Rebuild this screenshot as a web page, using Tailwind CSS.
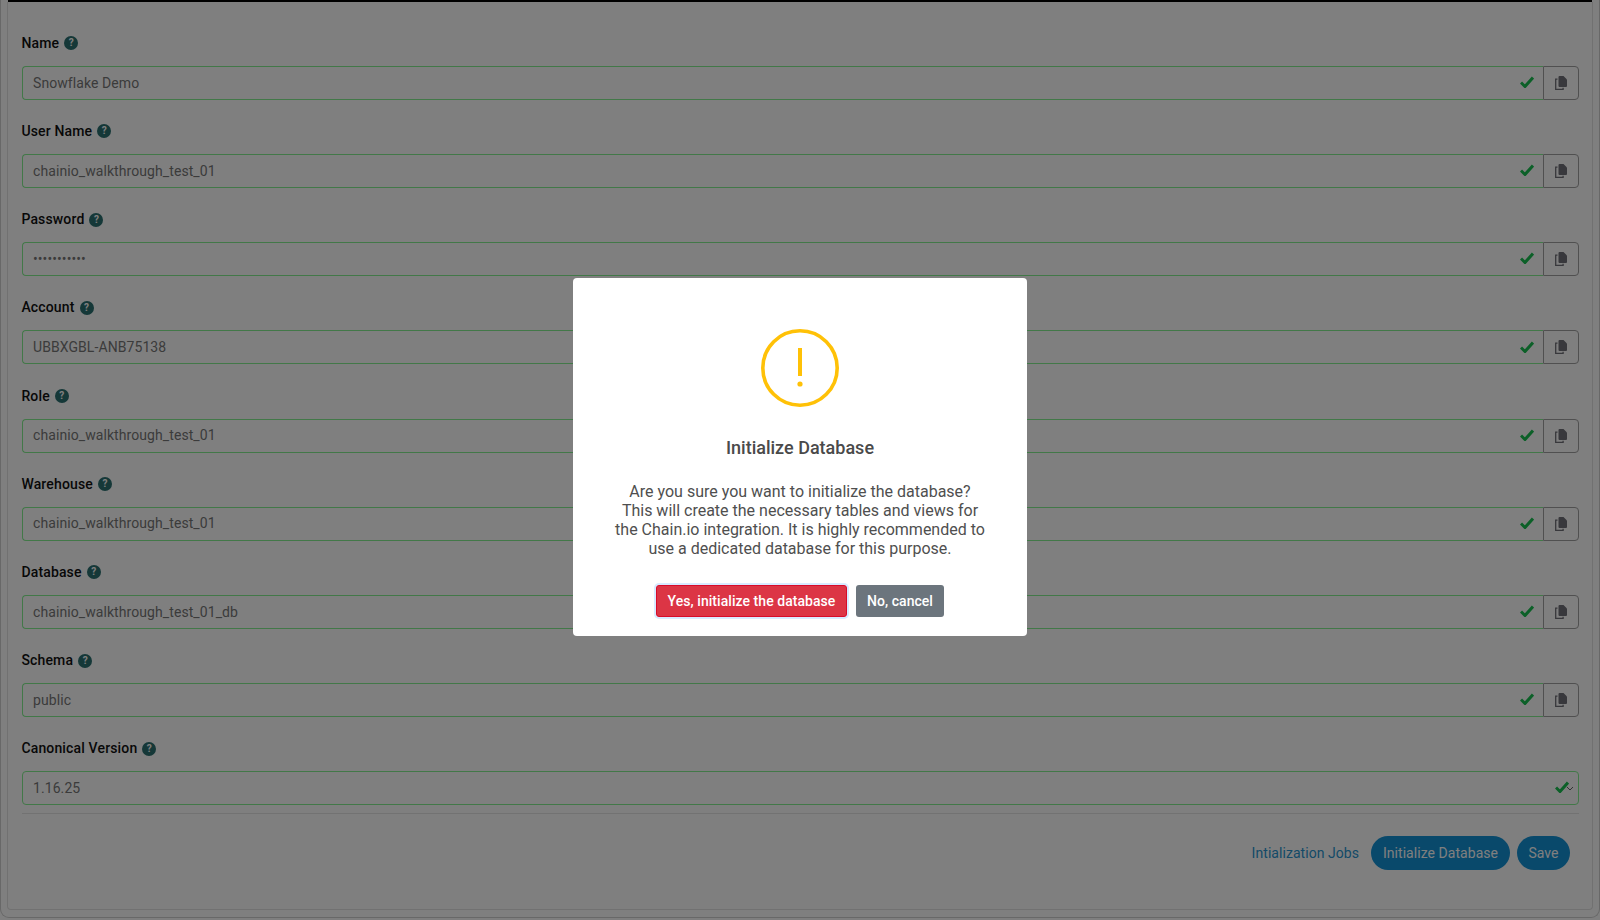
<!DOCTYPE html>
<html lang="en">
<head>
    <meta charset="UTF-8">
    <title>Initialize Database</title>
    <script src="https://cdn.jsdelivr.net/npm/@tailwindcss/browser@4"></script>
</head>
<body class="h-screen overflow-hidden bg-white font-['Roboto',sans-serif]">
    <div class="h-[918px] px-[7px] border-x border-b border-[#d0d0d0] rounded-b-[9px]">
        <div class="h-[2px] bg-black"></div>
        <div class="h-[908px] -mx-px border border-t-0 border-[#e3e3e3] rounded-b-[4px] pl-[14px] pr-[13px] pt-[27.8px]">
            <form id="fields"></form>
            <div class="mt-[8.2px] border-t border-[#e4e4e4] pt-[22px] pr-[9px] flex justify-end items-center">
                <a href="#" class="text-[14px] tracking-[0.05px] text-[#2a95d0] mr-[12px]">Intialization Jobs</a>
                <button class="h-[34px] w-[139px] rounded-full bg-[#1292d6] text-[14px] tracking-[0.05px] text-white">Initialize Database</button>
                <button class="h-[34px] w-[53px] ml-[7px] rounded-full bg-[#1292d6] text-[14px] tracking-[0.05px] text-white">Save</button>
            </div>
        </div>
    </div>

    <!-- Modal -->
    <div class="fixed inset-0 bg-black/50 flex items-center justify-center">
        <div class="w-[454px] h-[358px] mb-[6px] bg-white rounded-[4px] flex flex-col items-center pt-[51px]">
            <svg width="78" height="78" viewBox="0 0 78 78" fill="none">
                <circle cx="39" cy="39" r="37.2" stroke="#ffc107" stroke-width="3.6"/>
                <rect x="37" y="19" width="4" height="28" fill="#ffc107"/>
                <circle cx="39" cy="55" r="2.6" fill="#ffc107"/>
            </svg>
            <h2 class="mt-[29px] text-[18px] leading-[24px] font-medium text-[#4a4a4a]">Initialize Database</h2>
            <p class="mt-[22px] w-[372px] text-center text-[16px] leading-[19px] text-[#4f4f4f]">Are you sure you want to initialize the database? This will create the necessary tables and views for the Chain.io integration. It is highly recommended to use a dedicated database for this purpose.</p>
            <div class="mt-[27px] flex gap-[9px]">
                <button class="h-[32px] w-[191px] rounded-[3px] border border-[#d80b2a] bg-[#dc3545] text-[14px] tracking-[0.05px] font-medium text-white ring-2 ring-[#d8eaff]">Yes, initialize the database</button>
                <button class="h-[32px] w-[88px] rounded-[3px] bg-[#6c757d] text-[14px] tracking-[0.05px] font-medium text-white">No, cancel</button>
            </div>
        </div>
    </div>

    <script>
        const fields = [
            ['Name', 'Snowflake Demo'],
            ['User Name', 'chainio_walkthrough_test_01'],
            ['Password', '•••••••••••'],
            ['Account', 'UBBXGBL-ANB75138'],
            ['Role', 'chainio_walkthrough_test_01'],
            ['Warehouse', 'chainio_walkthrough_test_01'],
            ['Database', 'chainio_walkthrough_test_01_db'],
            ['Schema', 'public']
        ];
        const check = `<svg class="w-[14px] h-[12px] mb-[2px]" viewBox="0 0 14 12" fill="none"><path d="M1 6.5 L5 10.5 L13 1.5" stroke="#18c050" stroke-width="3"/></svg>`;
        const copy = `<svg width="12" height="14" viewBox="0 0 12 14"><path d="M2.5 3.2H.7v10.1h7.4V11.8" fill="none" stroke="#707078" stroke-width="1.3"/><path d="M4.5 0h4L12 3.5V10a1 1 0 0 1-1 1H4.5a1 1 0 0 1-1-1V1a1 1 0 0 1 1-1z" fill="#707078"/></svg>`;
        const label = name => `<label class="flex items-center h-[21px] mb-[12px] -ml-[0.6px] text-[14px] tracking-[0.15px] font-medium text-[#111]">${name}<span class="ml-[5px] w-[14px] h-[14px] rounded-full bg-[#2a7070] text-white text-[10px] tracking-normal leading-[14px] font-bold text-center">?</span></label>`;

        let html = '';
        fields.forEach(([name, value]) => {
            html += `<div class="h-[88.2px] pt-[3px]">${label(name)}
                <div class="flex h-[34px]">
                    <div class="flex-1 flex items-center justify-between border border-r-0 border-[#84f090] rounded-l-[4px] pl-[10px] pr-[9px] pt-[0.5px] text-[14px] tracking-[0.08px] text-[#777]">${value}${check}</div>
                    <div class="w-[36px] flex items-center justify-center border border-[#a0a0a0] rounded-r-[4px]">${copy}</div>
                </div>
            </div>`;
        });
        html += `<div class="pt-[3px]">${label('Canonical Version')}
            <div class="relative flex items-center h-[34px] border border-[#84f090] rounded-[4px] pl-[10px] pt-[0.5px] text-[14px] tracking-[0.08px] text-[#777]">1.16.25
                <span class="absolute right-[9px] top-[9px]">${check}</span>
                <svg class="absolute right-[4px] top-[14px]" width="8" height="6" viewBox="0 0 8 6" fill="none"><path d="M1 1l3 3 3-3" stroke="#666" stroke-width="1"/></svg>
            </div>
        </div>`;
        document.getElementById('fields').innerHTML = html;
    </script>
</body>
</html>
